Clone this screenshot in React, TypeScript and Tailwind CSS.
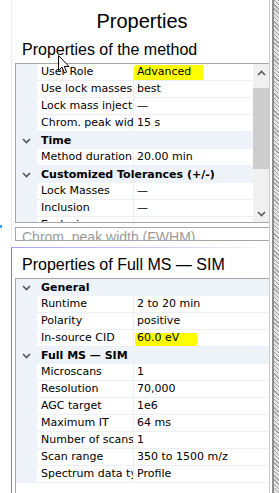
import React from 'react';

type Row =
    | { kind: 'cat'; title: string }
    | { kind: 'prop'; name: string; value: string; mark?: 'advanced' | 'cid' };

const methodRows: Row[] = [
    { kind: 'prop', name: 'User Role', value: 'Advanced', mark: 'advanced' },
    { kind: 'prop', name: 'Use lock masses', value: 'best' },
    { kind: 'prop', name: 'Lock mass injection', value: '—' },
    { kind: 'prop', name: 'Chrom. peak width (FWHM)', value: '15 s' },
    { kind: 'cat', title: 'Time' },
    { kind: 'prop', name: 'Method duration', value: '20.00 min' },
    { kind: 'cat', title: 'Customized Tolerances (+/-)' },
    { kind: 'prop', name: 'Lock Masses', value: '—' },
    { kind: 'prop', name: 'Inclusion', value: '—' },
    { kind: 'prop', name: 'Exclusion', value: '—' },
];

const scanRows: Row[] = [
    { kind: 'cat', title: 'General' },
    { kind: 'prop', name: 'Runtime', value: '2 to 20 min' },
    { kind: 'prop', name: 'Polarity', value: 'positive' },
    { kind: 'prop', name: 'In-source CID', value: '60.0 eV', mark: 'cid' },
    { kind: 'cat', title: 'Full MS — SIM' },
    { kind: 'prop', name: 'Microscans', value: '1' },
    { kind: 'prop', name: 'Resolution', value: '70,000' },
    { kind: 'prop', name: 'AGC target', value: '1e6' },
    { kind: 'prop', name: 'Maximum IT', value: '64 ms' },
    { kind: 'prop', name: 'Number of scans', value: '1' },
    { kind: 'prop', name: 'Scan range', value: '350 to 1500 m/z' },
    { kind: 'prop', name: 'Spectrum data type', value: 'Profile' },
];

const Chevron = ({ up = false, className = '' }: { up?: boolean; className?: string }) => (
    <svg width="9" height="6" viewBox="0 0 9 6" className={className}>
        <path
            d={up ? 'M1 5 L4.5 1.5 L8 5' : 'M1 1 L4.5 4.5 L8 1'}
            fill="none"
            stroke="currentColor"
            strokeWidth="1.6"
        />
    </svg>
);

const GridRow = ({ row }: { row: Row }) => {
    if (row.kind === 'cat') {
        return (
            <div className="flex h-[17px] shrink-0 items-center bg-[#eef2f9]">
                <div className="w-[21px] flex justify-center text-[#555]">
                    <Chevron />
                </div>
                <div className="pl-[4px] font-bold whitespace-nowrap leading-[16px]">{row.title}</div>
            </div>
        );
    }

    return (
        <div className="flex h-[17px] shrink-0">
            <div className="w-[21px] shrink-0 bg-[#eef2f9]" />
            <div className="w-[97px] shrink-0 border-r border-b border-[#eceff5] pl-[4px] overflow-hidden whitespace-nowrap leading-[16px]">
                {row.name}
            </div>
            <div className="relative flex-1 border-b border-[#eceff5] pl-[3px] overflow-hidden whitespace-nowrap leading-[16px]">
                {/* highlighter marks */}
                {row.mark === 'advanced' && (
                    <div className="absolute left-0 top-[1px] w-[69px] h-[16px] bg-[#ffff00] rounded-br-[3px] rounded-tl-[2px]" />
                )}
                {row.mark === 'cid' && (
                    <div className="absolute left-[1px] top-[3px] w-[62px] h-[13px] bg-[#ffff00] rounded-[2px]" />
                )}
                <span className="relative">{row.value}</span>
            </div>
        </div>
    );
};

export default function App() {
    return (
        <div className="relative w-[279px] h-[493px] bg-white flex overflow-hidden font-['Liberation_Sans',Arial,sans-serif] text-black">
            <div className="w-[270px] h-full border-r border-[#c9c9c9] flex flex-col">
                {/* Upper part */}
                <div className="pl-[11px] flex">
                    <div className="flex-1 border-l border-[#ececec] pl-[3px] flex flex-col">
                        <div className="pt-[10px] text-[20px] leading-[23px] text-center">Properties</div>
                        <div className="mt-[8px] pl-[7px] text-[16px] leading-[18px] whitespace-nowrap">
                            Properties of the method
                        </div>

                        {/* method grid */}
                        <div className="mt-[4px] h-[160px] border-l border-t border-b border-[#a6a6a6] flex font-['DejaVu_Sans',Verdana,sans-serif] text-[11px]">
                            <div className="flex-1 flex flex-col overflow-hidden">
                                {methodRows.map((r, i) => (
                                    <GridRow key={i} row={r} />
                                ))}
                            </div>
                            <div className="w-[16px] bg-[#f0f0f0] flex flex-col text-[#5a5a5a]">
                                <div className="h-[17px] flex items-center justify-center">
                                    <Chevron up />
                                </div>
                                <div className="flex-1">
                                    <div className="mt-[7px] h-[81px] bg-[#cdcdcd]" />
                                </div>
                                <div className="h-[17px] flex items-center justify-center">
                                    <Chevron />
                                </div>
                            </div>
                        </div>

                        {/* description box */}
                        <div className="mt-[4px] h-[14px] border-l border-t border-b border-[#a6a6a6] overflow-hidden">
                            <div className="pl-[6px] pt-[1px] text-[14px] leading-[16px] text-[#9a9a9a] whitespace-nowrap">
                                Chrom. peak width (FWHM)
                            </div>
                        </div>
                        <div className="h-[6px]" />
                    </div>
                </div>

                <div className="ml-[11px] h-px bg-[linear-gradient(to_right,#a3a3f3,#d6d6fa_70%,#ffffff)]" />

                {/* Lower part */}
                <div className="flex-1 pl-[11px] flex">
                    <div className="flex-1 border-l border-[#7878f0] pl-[3px] flex flex-col">
                        <div className="mt-[8px] pl-[7px] text-[16px] leading-[18px] whitespace-nowrap">
                            Properties of Full MS — SIM
                        </div>
                        <div className="mt-[4px] flex-1 border-l border-t border-[#a6a6a6] flex flex-col font-['DejaVu_Sans',Verdana,sans-serif] text-[11px]">
                            {scanRows.map((r, i) => (
                                <GridRow key={i} row={r} />
                            ))}
                        </div>
                    </div>
                </div>
            </div>

            <div className="w-[2px]" />
            <div className="w-[2px] bg-[#8e8e8e]" />
            <div className="flex-1 bg-[repeating-linear-gradient(45deg,#a2a2a2_0px,#a2a2a2_1px,#e6e6e6_1px,#e6e6e6_3px)]" />

            {/* stray marker at left edge */}
            <div className="absolute left-0 top-[225px] w-[2px] h-[3px] bg-[#3da8f0]" />

            {/* mouse pointer */}
            <svg width="13" height="20" viewBox="0 0 13 20" className="absolute left-[58px] top-[55px]">
                <path
                    d="M0.5 0.5 L0.5 15.5 L4 12.2 L6.4 18 L8.6 17 L6.3 11.5 L11 11.5 Z"
                    fill="#ffffff"
                    stroke="#000000"
                    strokeWidth="1"
                    strokeLinejoin="round"
                />
            </svg>
        </div>
    );
}
